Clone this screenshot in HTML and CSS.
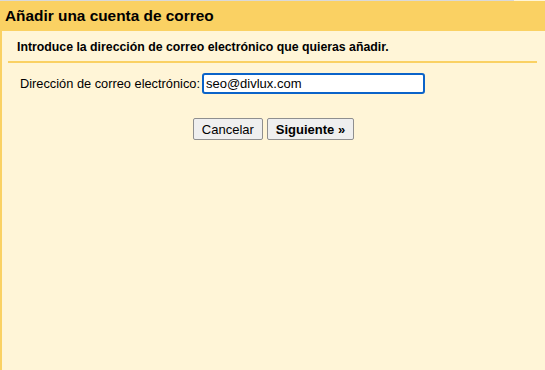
FILE: index.html
```html
<!DOCTYPE html>
<html lang="es">
<head>
  <meta charset="UTF-8">
  <title>Añadir una cuenta de correo</title>
  <link rel="stylesheet" href="styles.css">
</head>
<body>
  <div class="topline"></div>
  <h1 class="header">Añadir una cuenta de correo</h1>
  <div class="panel">
    <div class="intro">Introduce la dirección de correo electrónico que quieras añadir.</div>
    <div class="row">
      <label for="email">Dirección de correo electrónico:</label>
      <input type="text" id="email" value="seo@divlux.com" autofocus>
    </div>
    <div class="buttons">
      <button type="button">Cancelar</button>
      <button type="button" class="primary">Siguiente »</button>
    </div>
  </div>
</body>
</html>
```

FILE: styles.css
```css
html, body {
  height: 100%;
}
body {
  margin: 0;
  font-family: "Liberation Sans", Arial, sans-serif;
  background: #fff5d7;
  color: #000;
  display: flex;
  flex-direction: column;
}
.topline {
  height: 1px;
  background: #d9d9d9;
  margin-right: 31px;
}
.header {
  margin: 0;
  height: 30px;
  line-height: 30px;
  padding-left: 5px;
  background: #fad163;
  font-size: 15.4px;
  font-weight: bold;
}
.panel {
  flex: 1;
  border-left: 2px solid #fad163;
}
.intro {
  margin: 0 8px 0 6px;
  padding: 9px 0 7px 9px;
  border-bottom: 2px solid #fad163;
  font-size: 12.3px;
  font-weight: bold;
}
.row {
  display: flex;
  align-items: center;
  padding: 10px 0 0 18px;
  font-size: 12.8px;
}
.row label {
  margin-right: 2px;
}
.row input {
  width: 223px;
  height: 21px;
  box-sizing: border-box;
  padding: 0 2px;
  border: 2px solid #0b63c9;
  border-radius: 3px;
  font-family: inherit;
  font-size: 13px;
  outline: none;
}
.buttons {
  display: flex;
  justify-content: center;
  gap: 4px;
  padding: 24px 0 0 0;
}
.buttons button {
  height: 22px;
  padding: 0 8px;
  border: 1px solid #8f8f8f;
  border-radius: 2px;
  background: #efefef;
  font-family: inherit;
  font-size: 13px;
  color: #000;
}
.buttons .primary {
  font-weight: bold;
}
```
